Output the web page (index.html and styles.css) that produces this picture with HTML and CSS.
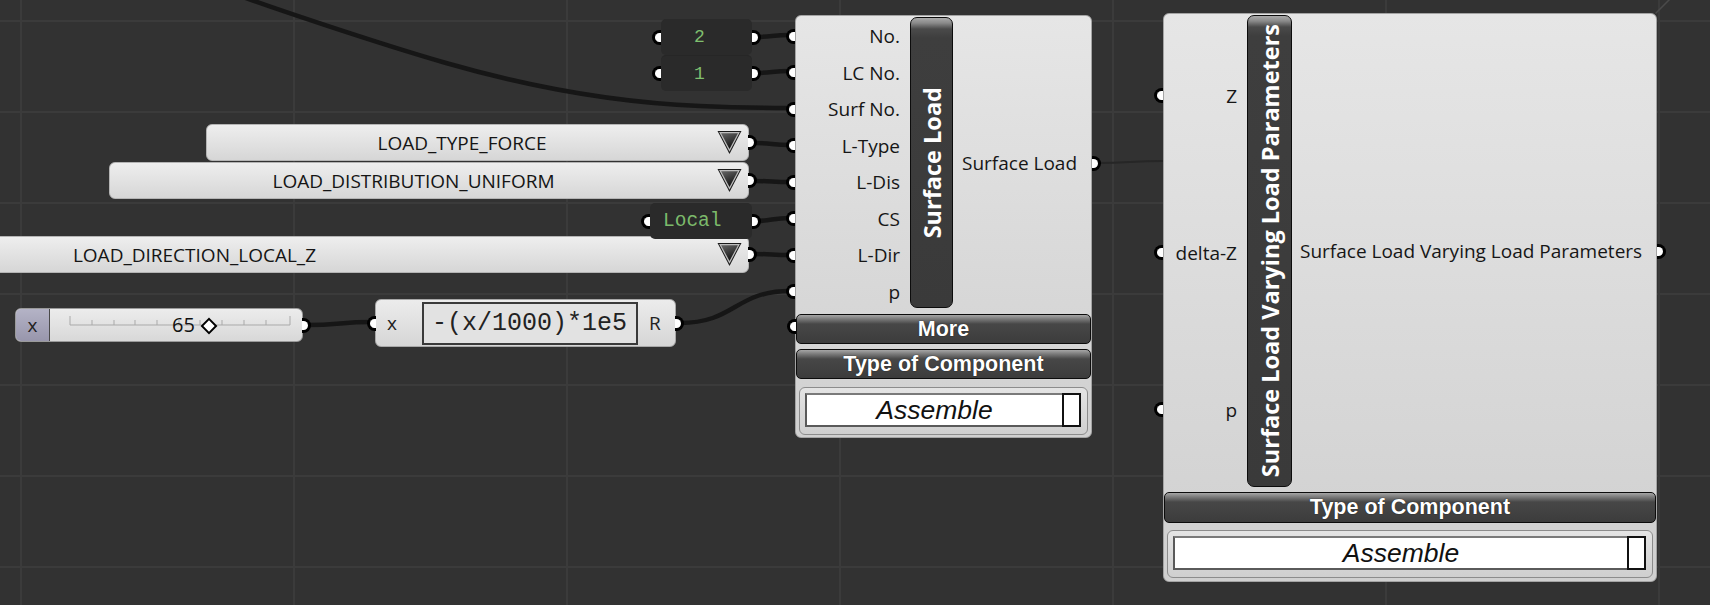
FILE: index.html
```html
<!DOCTYPE html>
<html>
<head>
<meta charset="utf-8">
<title>Surface Load</title>
<link rel="stylesheet" href="styles.css">
</head>
<body>
<div class="canvas">
  <svg class="defs" width="0" height="0">
    <defs>
      <linearGradient id="tg" x1="0" y1="0" x2="0.4" y2="1">
        <stop offset="0" stop-color="#6a6a6a"/>
        <stop offset="1" stop-color="#0e0e0e"/>
      </linearGradient>
    </defs>
  </svg>

  <svg class="wires" width="1710" height="605" viewBox="0 0 1710 605">
    <path class="w" d="M230 -8 C260 4, 380 44, 446 63 C512 82, 600 102, 700 106 C745 108, 770 108, 790 108"/>
    <path class="w" d="M756 37 C772 37, 772 35, 790 35"/>
    <path class="w" d="M756 73 C772 73, 772 71, 790 71"/>
    <path class="w" d="M755 143 C772 143, 772 145, 790 145"/>
    <path class="w" d="M755 181 C772 181, 772 182, 790 182"/>
    <path class="w" d="M756 221 C772 221, 772 218, 790 218"/>
    <path class="w" d="M755 254 C772 254, 772 255, 790 255"/>
    <path class="w" d="M680 323 C735 323, 735 291, 790 291"/>
    <path class="w" d="M306 325 C340 325, 340 322, 372 322"/>
    <path class="w thin" d="M1097 163 C1130 163, 1130 161, 1163 161"/>
    <path class="w faint" d="M1656 13 L1672 -3"/>
  </svg>

  <!-- number panels -->
  <div class="panel pn-two"><span class="grip gl"></span><span class="pval">2</span><span class="grip gr"></span></div>
  <div class="panel pn-one"><span class="grip gl"></span><span class="pval">1</span><span class="grip gr"></span></div>

  <!-- value lists -->
  <div class="vlist vl-type">
    <span class="vtext">LOAD_TYPE_FORCE</span>
    <svg class="tri" viewBox="0 0 24 24"><polygon points="0.5,1 23.5,1 12,23" fill="#1a1a1a"/><polygon points="3,2.6 21,2.6 12,19.5" fill="url(#tg)" stroke="#bdbdbd" stroke-width="1.2"/></svg>
    <span class="grip gr"></span>
  </div>
  <div class="vlist vl-dist">
    <span class="vtext">LOAD_DISTRIBUTION_UNIFORM</span>
    <svg class="tri" viewBox="0 0 24 24"><polygon points="0.5,1 23.5,1 12,23" fill="#1a1a1a"/><polygon points="3,2.6 21,2.6 12,19.5" fill="url(#tg)" stroke="#bdbdbd" stroke-width="1.2"/></svg>
    <span class="grip gr"></span>
  </div>
  <div class="vlist vl-dir">
    <span class="vtext">LOAD_DIRECTION_LOCAL_Z</span>
    <svg class="tri" viewBox="0 0 24 24"><polygon points="0.5,1 23.5,1 12,23" fill="#1a1a1a"/><polygon points="3,2.6 21,2.6 12,19.5" fill="url(#tg)" stroke="#bdbdbd" stroke-width="1.2"/></svg>
    <span class="grip gr"></span>
  </div>

  <div class="panel pn-local"><span class="grip gl"></span><span class="pval mono">Local</span><span class="grip gr"></span></div>

  <!-- slider -->
  <div class="slider">
    <span class="sx">x</span>
    <div class="sbody">
      <svg class="rail" width="224" height="14" viewBox="0 0 224 14">
        <path d="M2 11 H222 M2 2 V11 M24 6 V11 M46 6 V11 M67 6 V11 M89 6 V11 M111 6 V11 M132 6 V11 M154 6 V11 M176 6 V11 M198 6 V11 M222 2 V11" stroke="#a9a9a9" stroke-width="1" fill="none"/>
      </svg>
      <span class="sval" style="left:122px">65</span>
      <span class="knob" style="left:153px"></span>
    </div>
    <span class="grip gr"></span>
  </div>

  <!-- expression -->
  <div class="expr">
    <span class="grip gl"></span>
    <span class="ex-in">x</span>
    <span class="ex-box">-(x/1000)*1e5</span>
    <span class="ex-out">R</span>
    <span class="grip gr"></span>
  </div>

  <!-- Surface Load component -->
  <div class="comp sl">
    <div class="cmain">
      <div class="inputs sl-in">
        <div class="in-row"><span class="grip gl"></span>No.</div>
        <div class="in-row"><span class="grip gl"></span>LC No.</div>
        <div class="in-row"><span class="grip gl"></span>Surf No.</div>
        <div class="in-row"><span class="grip gl"></span>L-Type</div>
        <div class="in-row"><span class="grip gl"></span>L-Dis</div>
        <div class="in-row"><span class="grip gl"></span>CS</div>
        <div class="in-row"><span class="grip gl"></span>L-Dir</div>
        <div class="in-row"><span class="grip gl"></span>p</div>
      </div>
      <div class="title sl-title"><span>Surface Load</span></div>
      <div class="outputs sl-out"><span>Surface Load</span><span class="grip gr"></span></div>
    </div>
    <div class="bar more-bar"><span class="grip gl"></span>More</div>
    <div class="bar type-bar">Type of Component</div>
    <div class="dd sl-dd"><div class="dd-in"><span class="dd-text">Assemble</span><span class="dd-sq"></span></div></div>
  </div>

  <!-- Varying Load Parameters component -->
  <div class="comp vp">
    <div class="cmain">
      <div class="inputs vp-in">
        <div class="in-row vrow"><span class="grip gl"></span>Z</div>
        <div class="in-row vrow"><span class="grip gl"></span>delta-Z</div>
        <div class="in-row vrow"><span class="grip gl"></span>p</div>
      </div>
      <div class="title vp-title"><span>Surface Load Varying Load Parameters</span></div>
      <div class="outputs vp-out"><span>Surface Load Varying Load Parameters</span><span class="grip gr"></span></div>
    </div>
    <div class="bar type-bar vp-bar">Type of Component</div>
    <div class="dd vp-dd"><div class="dd-in"><span class="dd-text">Assemble</span><span class="dd-sq"></span></div></div>
  </div>
</div>
</body>
</html>
```

FILE: styles.css
```css
html, body {
  margin: 0;
  padding: 0;
}
body {
  width: 1710px;
  height: 605px;
  overflow: hidden;
  background-color: #323232;
  background-image:
    repeating-linear-gradient(90deg, #3b3b3b 0 2px, transparent 2px 273px),
    repeating-linear-gradient(180deg, #3b3b3b 0 2px, transparent 2px 91px);
  background-position: 20px 0, 0 20px;
  font-family: "Open Sans", "Noto Sans", sans-serif;
}
.canvas {
  position: relative;
  width: 1710px;
  height: 605px;
}
.defs { position: absolute; }
.wires {
  position: absolute;
  left: 0;
  top: 0;
}
.w {
  fill: none;
  stroke: #161616;
  stroke-width: 4.5;
  stroke-linecap: round;
}
.w.thin { stroke: #262626; stroke-width: 2; }
.w.faint { stroke: #4a4a4a; stroke-width: 1.5; }

/* grips */
.grip {
  position: absolute;
  top: 50%;
  width: 9px;
  height: 15px;
  margin-top: -7.5px;
  background: #fff;
  border: 3px solid #000;
  box-sizing: border-box;
  z-index: 2;
}
.gl { left: -9px; border-right: none; border-radius: 8px 0 0 8px; }
.gr { right: -9px; border-left: none; border-radius: 0 8px 8px 0; }

/* panels */
.panel {
  position: absolute;
  background: #2a2a2a;
  border-radius: 5px;
  display: flex;
  align-items: center;
  box-sizing: border-box;
}
.pn-two { left: 661px; top: 19px; width: 91px; height: 36px; justify-content: center; padding-right: 14px; }
.pn-one { left: 661px; top: 55px; width: 91px; height: 36px; justify-content: center; padding-right: 14px; border-top: 1px solid #262626; }
.pn-local { left: 650px; top: 203px; width: 102px; height: 36px; padding-left: 13px; }
.pval {
  font-family: "Liberation Mono", "DejaVu Sans Mono", monospace;
  font-size: 18px;
  color: #7fbf6e;
}
.pval.mono {
  font-family: "Liberation Mono", "Courier New", monospace;
  font-size: 19.5px;
  color: #7cba6b;
}

/* value lists */
.vlist {
  position: absolute;
  display: flex;
  align-items: center;
  background: linear-gradient(#eeeeee, #d6d6d6);
  border: 1px solid #b4b4b4;
  border-radius: 6px;
  box-sizing: border-box;
  height: 37px;
  padding-right: 6px;
  font-size: 19px;
  color: #151515;
}
.vl-type { left: 206px; top: 124px; width: 543px; }
.vl-dist { left: 109px; top: 162px; width: 640px; }
.vl-dir  { left: -329px; top: 236px; width: 1078px; }
.vtext {
  flex: 1;
  text-align: center;
  white-space: nowrap;
}
.tri { width: 25px; height: 25px; flex: none; }

/* slider */
.slider {
  position: absolute;
  left: 15px;
  top: 308px;
  width: 288px;
  height: 34px;
  display: flex;
  border-radius: 6px;
  border: 1px solid #9a9a9a;
  box-sizing: border-box;
  background: linear-gradient(#ececec, #d8d8d8);
}
.sx {
  width: 33px;
  flex: none;
  background: linear-gradient(#b4b3c6, #9896ac);
  border-right: 1px solid #4a4a4a;
  border-radius: 5px 0 0 5px;
  display: flex;
  align-items: center;
  justify-content: center;
  font-size: 19px;
  color: #222;
}
.sbody {
  flex: 1;
  position: relative;
}
.rail { position: absolute; left: 18px; top: 5px; }
.sval {
  position: absolute;
  top: 2px;
  font-size: 20px;
  line-height: 28px;
  color: #111;
}
.knob {
  position: absolute;
  top: 11px;
  width: 8px;
  height: 8px;
  background: #fff;
  border: 2px solid #000;
  transform: rotate(45deg);
}

/* expression */
.expr {
  position: absolute;
  left: 375px;
  top: 299px;
  width: 301px;
  height: 48px;
  display: flex;
  align-items: center;
  box-sizing: border-box;
  background: linear-gradient(#ececec, #d6d6d6);
  border: 1px solid #a8a8a8;
  border-radius: 6px;
}
.ex-in {
  width: 46px;
  padding-left: 11px;
  box-sizing: border-box;
  font-size: 19px;
  color: #222;
}
.ex-box {
  width: 216px;
  height: 43px;
  box-sizing: border-box;
  border: 2px solid #3a3a3a;
  background: #e2e2e2;
  display: flex;
  align-items: center;
  padding-left: 8px;
  font-family: "Liberation Mono", "DejaVu Sans Mono", monospace;
  font-size: 25px;
  color: #222;
  white-space: nowrap;
}
.ex-out {
  padding-left: 11px;
  font-size: 19px;
  color: #222;
}

/* components */
.comp {
  position: absolute;
  box-sizing: border-box;
  border: 1px solid #a4a4a4;
  border-radius: 6px;
  background: linear-gradient(#e6e6e6, #d0d0d0);
  display: flex;
  flex-direction: column;
  color: #161616;
  font-size: 19px;
}
.sl { left: 795px; top: 15px; width: 297px; height: 423px; }
.vp { left: 1163px; top: 13px; width: 494px; height: 569px; }
.cmain { display: flex; }
.inputs { display: flex; flex-direction: column; flex: none; }
.sl-in { width: 114px; padding-top: 2px; }
.vp-in { width: 83px; padding-top: 3px; }
.in-row {
  position: relative;
  height: 36.5px;
  display: flex;
  align-items: center;
  justify-content: flex-end;
  padding-right: 10px;
}
.in-row .gl { left: -10px; }
.vrow { height: 157px; }

.title {
  flex: none;
  box-sizing: border-box;
  border: 1px solid #0c0c0c;
  border-radius: 7px;
  background: linear-gradient(#a9a9a9 0px, #8a8a8a 5px, #4a4a4a 11px, #3e3e3e 20px, #3a3a3a 100%);
  display: flex;
  align-items: center;
  justify-content: center;
}
.title span {
  writing-mode: vertical-rl;
  transform: rotate(180deg);
  color: #fff;
  font-weight: 700;
  font-size: 23.5px;
  white-space: nowrap;
}
.sl-title { width: 43px; height: 291px; margin-top: 1px; }
.vp-title { width: 45px; height: 472px; margin-top: 1px; }

.outputs {
  flex: 1;
  position: relative;
  display: flex;
  align-items: center;
  white-space: nowrap;
}
.sl-out { padding-left: 9px; }
.vp-out { padding-left: 8px; }
.outputs .gr { right: -10px; }

.bar {
  position: relative;
  box-sizing: border-box;
  border: 1px solid #0c0c0c;
  border-radius: 5px;
  background: linear-gradient(#a6a6a6 0px, #7a7a7a 4px, #474747 9px, #3c3c3c 100%);
  color: #fff;
  font-family: "Liberation Sans", Arial, sans-serif;
  font-weight: 700;
  font-size: 21.5px;
  display: flex;
  align-items: center;
  justify-content: center;
  text-shadow: 0 0 1px #000;
}
.more-bar { height: 30px; margin-top: 4px; }
.more-bar .gl { left: -10px; margin-top: -10px; }
.type-bar { height: 30px; margin-top: 5px; }
.vp-bar { height: 31px; margin-top: 4px; }

.dd {
  box-sizing: border-box;
  margin: 8px 3px 0;
  height: 48px;
  border: 1px solid #8c8c8c;
  border-radius: 6px;
  background: linear-gradient(#e4e4e4, #cfcfcf);
  padding: 5px 6px 7px 5px;
}
.vp-dd { margin-top: 7px; }
.dd-in {
  height: 100%;
  box-sizing: border-box;
  border: 2px solid #5a5a5a;
  border-top-color: #7a7a7a;
  background: #fff;
  display: flex;
}
.dd-text {
  flex: 1;
  display: flex;
  align-items: center;
  justify-content: center;
  font-family: "Liberation Sans", Arial, sans-serif;
  font-style: italic;
  font-size: 26.5px;
  color: #111;
}
.dd-sq {
  width: 19px;
  flex: none;
  box-sizing: border-box;
  border: 2px solid #111;
  margin: -2px -2px -2px 0;
  background: #fff;
}
```
